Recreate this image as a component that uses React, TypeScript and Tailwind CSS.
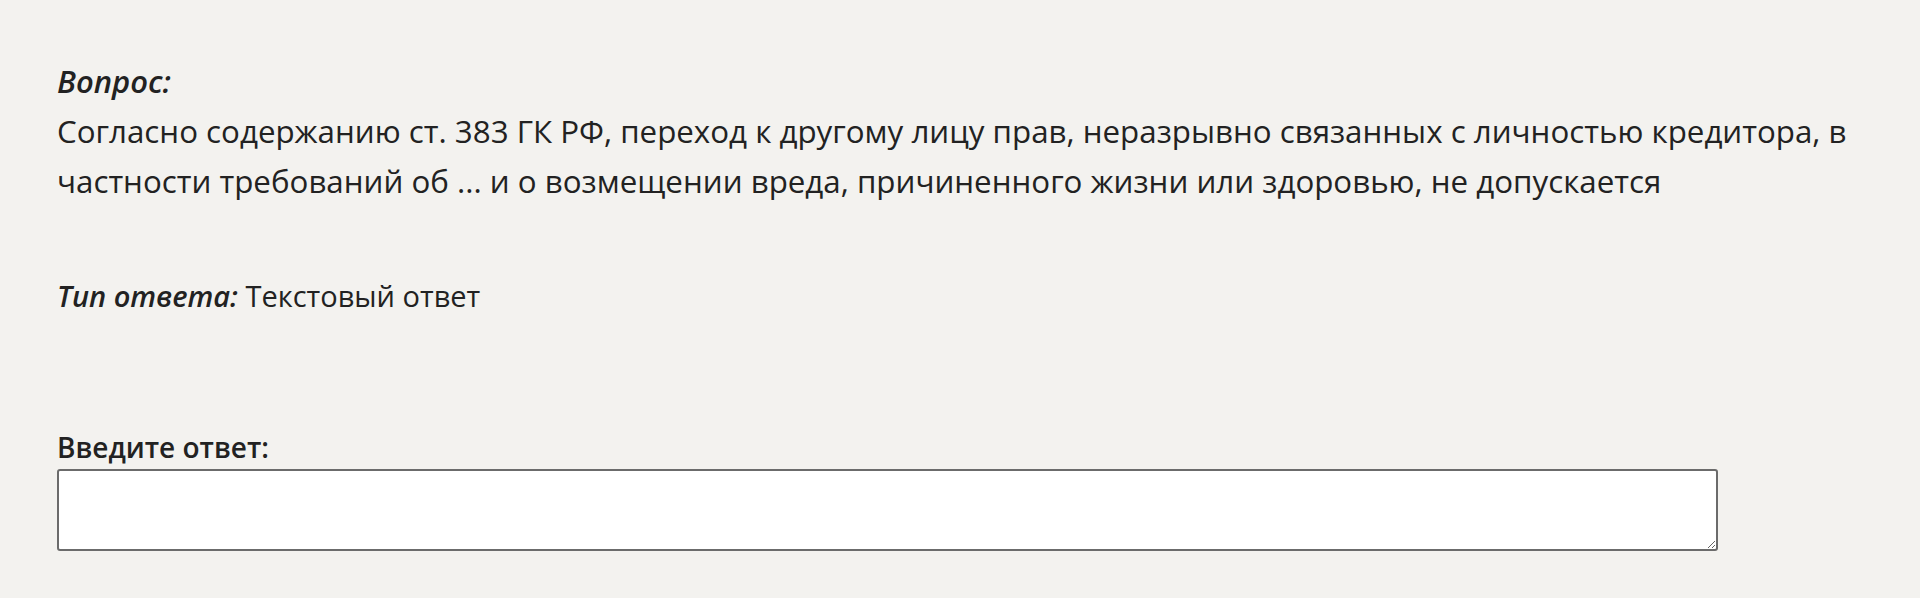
export default function App() {
  return (
    <div className="min-h-screen bg-[#f3f2ef] pl-[57px] pr-[40px] pt-[56px] font-['Open_Sans',sans-serif] text-[#222]">
      <p className="text-[31px] leading-[50px] font-semibold italic">Вопрос:</p>
      <p className="text-[31.3px] leading-[50px]">
        Согласно содержанию ст. 383 ГК РФ, переход к другому лицу прав, неразрывно связанных с личностью кредитора, в
        частности требований об ... и о возмещении вреда, причиненного жизни или здоровью, не допускается
      </p>

      <p className="mt-[65px] text-[29px] leading-[50px]">
        <span className="font-semibold italic">Тип ответа:</span> Текстовый ответ
      </p>

      <div className="mt-[108px] flex flex-col">
        <label htmlFor="answer" className="text-[28px] leading-[36px] font-semibold">
          Введите ответ:
        </label>
        <textarea
          id="answer"
          className="mt-[4px] h-[82px] w-[1661px] rounded-[3px] border-2 border-[#6b6b6b] bg-white"
        />
      </div>
    </div>
  );
}
